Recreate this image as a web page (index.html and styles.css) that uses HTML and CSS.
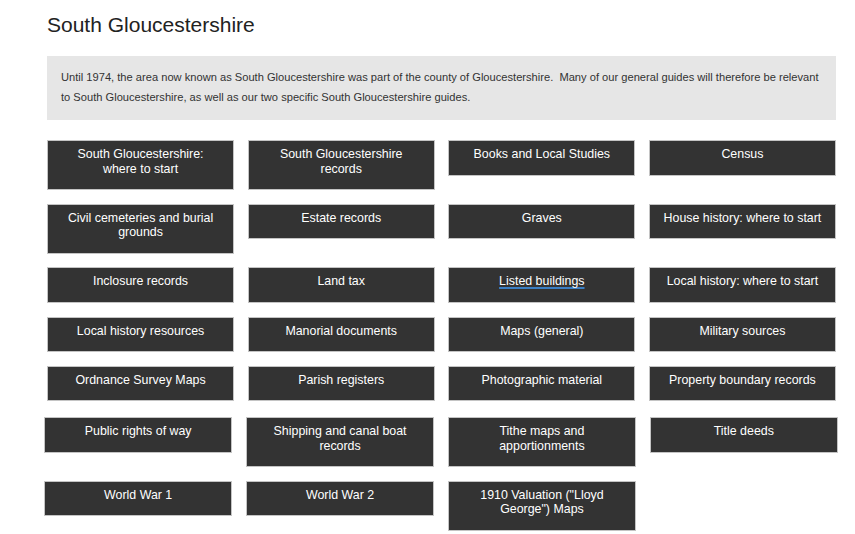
FILE: index.html
```html
<!DOCTYPE html>
<html lang="en">
<head>
    <meta charset="UTF-8">
    <meta name="viewport" content="width=device-width, initial-scale=1.0">
    <title>South Gloucestershire</title>
    <link rel="stylesheet" href="styles.css">
</head>
<body>
    <div class="container">
        <h1>South Gloucestershire</h1>

        <div class="intro">
            <p>Until 1974, the area now known as South Gloucestershire was part of the county of Gloucestershire.&nbsp; Many of our general guides will therefore be relevant to South Gloucestershire, as well as our two specific South Gloucestershire guides.</p>
        </div>

        <div class="guides">
            <a class="guide" href="#">South Gloucestershire: where to start</a>
            <a class="guide" href="#">South Gloucestershire records</a>
            <a class="guide" href="#">Books and Local Studies</a>
            <a class="guide" href="#">Census</a>
            <a class="guide" href="#">Civil cemeteries and burial grounds</a>
            <a class="guide" href="#">Estate records</a>
            <a class="guide" href="#">Graves</a>
            <a class="guide" href="#">House history: where to start</a>
            <a class="guide" href="#">Inclosure records</a>
            <a class="guide" href="#">Land tax</a>
            <a class="guide guide-hover" href="#">Listed buildings</a>
            <a class="guide" href="#">Local history: where to start</a>
            <a class="guide" href="#">Local history resources</a>
            <a class="guide" href="#">Manorial documents</a>
            <a class="guide" href="#">Maps (general)</a>
            <a class="guide" href="#">Military sources</a>
            <a class="guide" href="#">Ordnance Survey Maps</a>
            <a class="guide" href="#">Parish registers</a>
            <a class="guide" href="#">Photographic material</a>
            <a class="guide" href="#">Property boundary records</a>
        </div>

        <div class="guides guides-more">
            <a class="guide" href="#">Public rights of way</a>
            <a class="guide" href="#">Shipping and canal boat records</a>
            <a class="guide" href="#">Tithe maps and apportionments</a>
            <a class="guide" href="#">Title deeds</a>
            <a class="guide" href="#">World War 1</a>
            <a class="guide" href="#">World War 2</a>
            <a class="guide" href="#">1910 Valuation ("Lloyd George") Maps</a>
        </div>
    </div>
</body>
</html>
```

FILE: styles.css
```css
body {
    font-family: 'Liberation Sans', Arial, Helvetica, sans-serif;
    margin: 0;
    padding: 0;
    background-color: #ffffff;
    color: #333;
}
.container {
    width: 789px;
    margin: 0 0 0 47px;
    padding-top: 12px;
}
h1 {
    font-size: 21px;
    font-weight: normal;
    color: #222;
    margin: 0 0 18px;
    line-height: 26px;
}
.intro {
    background: #e6e6e6;
    padding: 11px 14px 13px;
    margin-bottom: 20px;
}
.intro p {
    margin: 0;
    font-size: 11.13px;
    line-height: 20px;
    color: #333;
}
.guides {
    display: grid;
    grid-template-columns: repeat(4, 1fr);
    column-gap: 13.5px;
    row-gap: 13.7px;
    align-items: start;
}
.guides-more {
    width: 794px;
    margin: 16px 0 0 -3px;
}
.guide {
    display: block;
    background: #333333;
    border: 1px solid #c4c4c4;
    color: #ffffff;
    text-decoration: none;
    text-align: center;
    font-size: 12.4px;
    line-height: 14.5px;
    padding: 6px 12px 13px;
}
.guide:hover, .guide-hover {
    text-decoration: underline;
    text-decoration-color: #3b7fc4;
    text-decoration-thickness: 2px;
    text-underline-offset: 2px;
}
```
